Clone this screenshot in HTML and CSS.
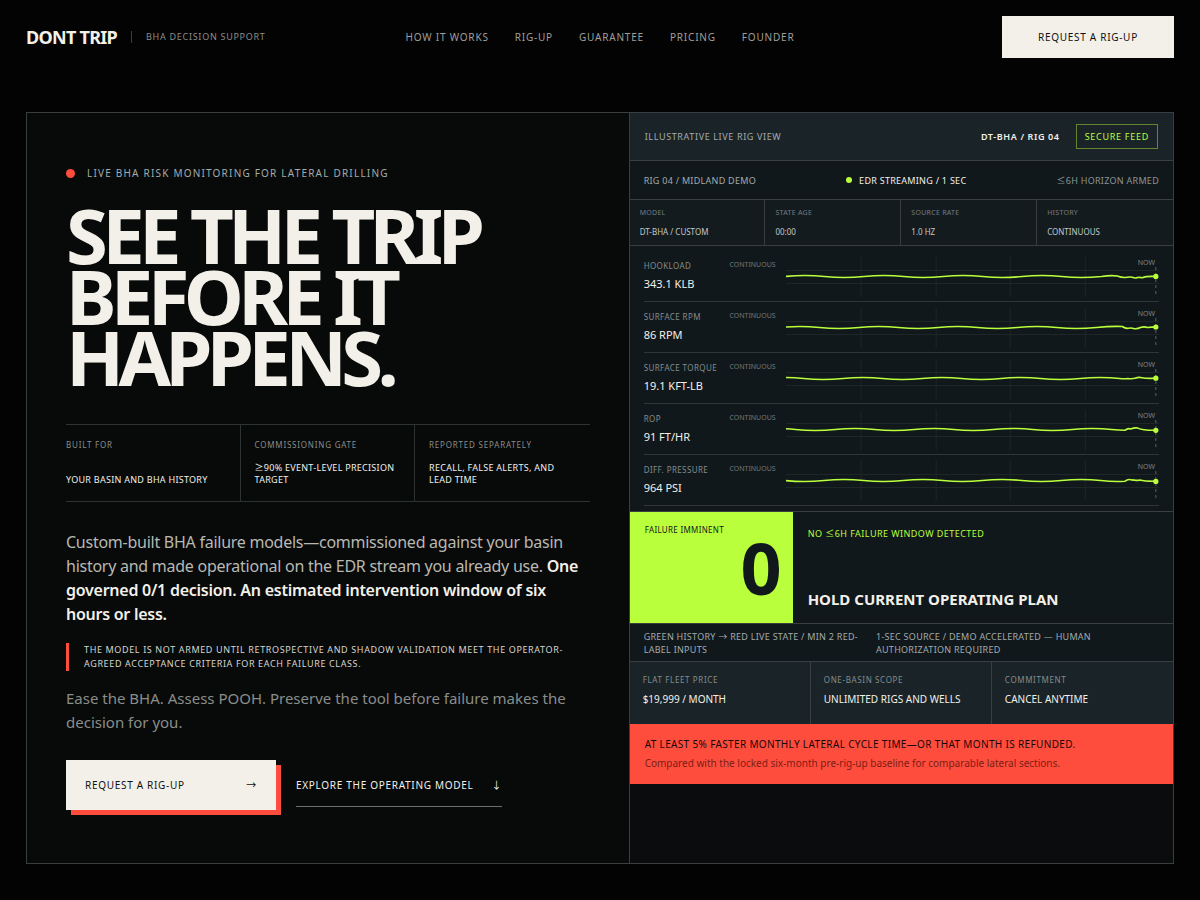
FILE: index.html
```html
<!DOCTYPE html>
<html lang="en">
<head>
  <meta charset="UTF-8">
  <meta name="viewport" content="width=device-width, initial-scale=1.0">
  <title>Dont Trip | BHA Decision Support</title>
  <link rel="stylesheet" href="styles.css">
</head>
<body>
  <header class="site-header">
    <a class="brand" href="#top">
      <span class="brand-name">DONT TRIP</span>
      <span class="brand-sub">BHA DECISION SUPPORT</span>
    </a>
    <nav class="site-nav">
      <a href="#how">HOW IT WORKS</a>
      <a href="#rig-up">RIG-UP</a>
      <a href="#guarantee">GUARANTEE</a>
      <a href="#pricing">PRICING</a>
      <a href="#founder">FOUNDER</a>
    </nav>
    <a class="header-cta" href="#request">REQUEST A RIG-UP</a>
  </header>

  <main class="hero" id="top">
    <section class="hero-copy">
      <p class="eyebrow"><span class="dot dot-red"></span>LIVE BHA RISK MONITORING FOR LATERAL DRILLING</p>
      <h1>SEE THE TRIP<br>BEFORE IT<br>HAPPENS.</h1>

      <dl class="facts">
        <div>
          <dt>BUILT FOR</dt>
          <dd>YOUR BASIN AND BHA HISTORY</dd>
        </div>
        <div>
          <dt>COMMISSIONING GATE</dt>
          <dd><span class="sym">≥</span>90% EVENT-LEVEL PRECISION TARGET</dd>
        </div>
        <div>
          <dt>REPORTED SEPARATELY</dt>
          <dd>RECALL, FALSE ALERTS, AND LEAD TIME</dd>
        </div>
      </dl>

      <p class="lead">Custom-built BHA failure models—commissioned against your basin history and made operational on the EDR stream you already use. <strong>One governed 0/1 decision. An estimated intervention window of six hours or less.</strong></p>
      <p class="notice">THE MODEL IS NOT ARMED UNTIL RETROSPECTIVE AND SHADOW VALIDATION MEET THE OPERATOR-AGREED ACCEPTANCE CRITERIA FOR EACH FAILURE CLASS.</p>
      <p class="sub">Ease the BHA. Assess POOH. Preserve the tool before failure makes the decision for you.</p>

      <div class="actions">
        <a class="btn-primary" href="#request"><span>REQUEST A RIG-UP</span><span class="sym">→</span></a>
        <a class="btn-link" href="#how"><span>EXPLORE THE OPERATING MODEL</span><span class="sym">↓</span></a>
      </div>
    </section>

    <section class="console">
      <div class="console-head">
        <span>ILLUSTRATIVE LIVE RIG VIEW</span>
        <strong>DT-BHA / RIG 04</strong>
        <span class="tag">SECURE FEED</span>
      </div>
      <div class="console-status">
        <span>RIG 04 / MIDLAND DEMO</span>
        <span class="streaming"><span class="dot dot-lime"></span>EDR STREAMING / 1 SEC</span>
        <span class="horizon"><span class="sym">≤</span>6H HORIZON ARMED</span>
      </div>
      <dl class="meta">
        <div><dt>MODEL</dt><dd>DT-BHA / CUSTOM</dd></div>
        <div><dt>STATE AGE</dt><dd>00:00</dd></div>
        <div><dt>SOURCE RATE</dt><dd>1.0 HZ</dd></div>
        <div><dt>HISTORY</dt><dd>CONTINUOUS</dd></div>
      </dl>

      <div class="traces">
        <div class="trace">
          <div class="trace-info">
            <span class="trace-name">HOOKLOAD</span>
            <span class="trace-mode">CONTINUOUS</span>
            <span class="trace-value">343.1 KLB</span>
          </div>
          <div class="chart">
            <svg viewBox="0 0 373 40" preserveAspectRatio="none">
              <path class="grid" d="M75 0v40M150 0v40M224 0v40M299 0v40M0 13.5h373M0 26.5h373"/>
              <path class="now-line" d="M369.5 10v30"/>
              <path class="wave" d="M-1 19.5q20 -2 39.5 0t39.5 0t39.5 0t39.5 0t39.5 0t39.5 0t39.5 0t39.5 0q10 -1.4 16 -.5q4 1.6 8 1.5q4 -1 7 -.2q3 1.2 5 .2q3 -.4 5 .2q4 -1.6 13 -1.2"/>
              <circle class="now-dot" cx="369.5" cy="19.4" r="2.6"/>
            </svg>
            <span class="now">NOW</span>
          </div>
        </div>
        <div class="trace">
          <div class="trace-info">
            <span class="trace-name">SURFACE RPM</span>
            <span class="trace-mode">CONTINUOUS</span>
            <span class="trace-value">86 RPM</span>
          </div>
          <div class="chart">
            <svg viewBox="0 0 373 40" preserveAspectRatio="none">
              <path class="grid" d="M75 0v40M150 0v40M224 0v40M299 0v40M0 13.5h373M0 26.5h373"/>
              <path class="now-line" d="M369.5 10v30"/>
              <path class="wave" d="M-6 19.5q20 -2 39.5 0t39.5 0t39.5 0t39.5 0t39.5 0t39.5 0t39.5 0t39.5 0q14 -1.4 26 -1q3 2.2 6 1.8q3 -.8 6 .4q4 .2 6 -1.2q4 -1.2 7 0q4 -.6 10 -.6"/>
              <circle class="now-dot" cx="369.5" cy="19" r="2.6"/>
            </svg>
            <span class="now">NOW</span>
          </div>
        </div>
        <div class="trace">
          <div class="trace-info">
            <span class="trace-name">SURFACE TORQUE</span>
            <span class="trace-mode">CONTINUOUS</span>
            <span class="trace-value">19.1 KFT-LB</span>
          </div>
          <div class="chart">
            <svg viewBox="0 0 373 40" preserveAspectRatio="none">
              <path class="grid" d="M75 0v40M150 0v40M224 0v40M299 0v40M0 13.5h373M0 26.5h373"/>
              <path class="now-line" d="M369.5 10v30"/>
              <path class="wave" d="M-22 19.5q20 -2 39.5 0t39.5 0t39.5 0t39.5 0t39.5 0t39.5 0t39.5 0t39.5 0t39.5 0q4 .6 8 0q4 .6 7 -.2q4 -1.4 7 -.6q4 1 14 .6"/>
              <circle class="now-dot" cx="369.5" cy="19.2" r="2.6"/>
            </svg>
            <span class="now">NOW</span>
          </div>
        </div>
        <div class="trace">
          <div class="trace-info">
            <span class="trace-name">ROP</span>
            <span class="trace-mode">CONTINUOUS</span>
            <span class="trace-value">91 FT/HR</span>
          </div>
          <div class="chart">
            <svg viewBox="0 0 373 40" preserveAspectRatio="none">
              <path class="grid" d="M75 0v40M150 0v40M224 0v40M299 0v40M0 13.5h373M0 26.5h373"/>
              <path class="now-line" d="M369.5 10v30"/>
              <path class="wave" d="M-30 19.5q20 -2 39.5 0t39.5 0t39.5 0t39.5 0t39.5 0t39.5 0t39.5 0t39.5 0t39.5 0q7 .8 13 .8q3 -2.4 6 -1.4q4 -1.6 7 -.8q5 2.4 18 2.2"/>
              <circle class="now-dot" cx="369.5" cy="20.3" r="2.6"/>
            </svg>
            <span class="now">NOW</span>
          </div>
        </div>
        <div class="trace">
          <div class="trace-info">
            <span class="trace-name">DIFF. PRESSURE</span>
            <span class="trace-mode">CONTINUOUS</span>
            <span class="trace-value">964 PSI</span>
          </div>
          <div class="chart">
            <svg viewBox="0 0 373 40" preserveAspectRatio="none">
              <path class="grid" d="M75 0v40M150 0v40M224 0v40M299 0v40M0 13.5h373M0 26.5h373"/>
              <path class="now-line" d="M369.5 10v30"/>
              <path class="wave" d="M-41 19.5q20 -2 39.5 0t39.5 0t39.5 0t39.5 0t39.5 0t39.5 0t39.5 0t39.5 0t39.5 0q12 1.4 24 .8q3 -2.6 7 -1.4q4 .8 8 .2q4 1.2 15 1.2"/>
              <circle class="now-dot" cx="369.5" cy="20.4" r="2.6"/>
            </svg>
            <span class="now">NOW</span>
          </div>
        </div>
      </div>

      <div class="decision">
        <div class="decision-flag">
          <span>FAILURE IMMINENT</span>
          <strong>0</strong>
        </div>
        <div class="decision-text">
          <p>NO <span class="sym">≤</span>6H FAILURE WINDOW DETECTED</p>
          <strong>HOLD CURRENT OPERATING PLAN</strong>
        </div>
      </div>
      <div class="console-notes">
        <p>GREEN HISTORY <span class="sym">→</span> RED LIVE STATE / MIN 2 RED-LABEL INPUTS</p>
        <p>1-SEC SOURCE / DEMO ACCELERATED — HUMAN AUTHORIZATION REQUIRED</p>
      </div>
      <dl class="terms">
        <div><dt>FLAT FLEET PRICE</dt><dd>$19,999 / MONTH</dd></div>
        <div><dt>ONE-BASIN SCOPE</dt><dd>UNLIMITED RIGS AND WELLS</dd></div>
        <div><dt>COMMITMENT</dt><dd>CANCEL ANYTIME</dd></div>
      </dl>
      <div class="guarantee">
        <strong>AT LEAST 5% FASTER MONTHLY LATERAL CYCLE TIME—OR THAT MONTH IS REFUNDED.</strong>
        <span>Compared with the locked six-month pre-rig-up baseline for comparable lateral sections.</span>
      </div>
    </section>
  </main>
</body>
</html>
```
FILE: styles.css
```css
:root {
  --black: #030303;
  --ink: #070a09;
  --panel: #11181b;
  --panel-light: #1a2428;
  --line: #393f40;
  --cream: #f3f0e9;
  --muted: #8b8d8a;
  --steel: #a3abad;
  --lime: #b9ff3c;
  --red: #ff4d3d;
}
* {
  box-sizing: border-box;
}
body {
  margin: 0;
  background: var(--black);
  color: var(--cream);
  font-family: "Noto Sans", sans-serif;
}
h1, p, dl, dd {
  margin: 0;
}
a {
  color: inherit;
  text-decoration: none;
}
/* math signs and arrows, line-height 0 so they never grow a row */
.sym {
  font-family: "Noto Sans CJK JP", sans-serif;
  line-height: 0;
}

/* header */
.site-header {
  display: grid;
  grid-template-columns: 1fr auto 1fr;
  align-items: center;
  height: 74px;
  padding: 0 26px;
}
.brand {
  display: flex;
  align-items: center;
  gap: 14px;
}
.brand-name {
  font-size: 18px;
  font-weight: 700;
  letter-spacing: -0.04em;
}
.brand-sub {
  padding-left: 14px;
  border-left: 1px solid var(--line);
  color: var(--muted);
  font-size: 9px;
  line-height: 12px;
  letter-spacing: 0.08em;
}
.site-nav {
  display: flex;
  gap: 26px;
  color: #a09f9b;
  font-size: 10px;
  letter-spacing: 0.08em;
}
.header-cta {
  justify-self: end;
  width: 172px;
  background: var(--cream);
  color: #111;
  font-size: 10px;
  line-height: 42px;
  letter-spacing: 0.07em;
  text-align: center;
}

/* hero */
.hero {
  display: grid;
  grid-template-columns: 1.05fr 0.95fr;
  min-height: 752px;
  margin: 38px 26px 36px;
  border: 1px solid var(--line);
  background: var(--ink);
}
.hero-copy {
  padding: 53px 39px 48px;
}
.dot {
  flex: none;
  border-radius: 50%;
}
.dot-red {
  width: 9px;
  height: 9px;
  background: var(--red);
}
.dot-lime {
  width: 6px;
  height: 6px;
  background: var(--lime);
}
.eyebrow {
  display: flex;
  align-items: center;
  gap: 12px;
  color: var(--steel);
  font-size: 10px;
  line-height: 14px;
  letter-spacing: 0.12em;
}
h1 {
  margin-top: 24px;
  font-size: 76px;
  font-weight: 700;
  line-height: 61px;
  letter-spacing: -0.075em;
}
.facts {
  display: grid;
  grid-template-columns: repeat(3, 1fr);
  margin-top: 37px;
  border-top: 1px solid #2d3232;
  border-bottom: 1px solid #2d3232;
}
.facts div {
  display: flex;
  flex-direction: column;
  justify-content: space-between;
  gap: 11px;
  padding: 14px 14px 15px;
  border-right: 1px solid #2d3232;
}
.facts div:first-child {
  padding-left: 0;
}
.facts div:last-child {
  border-right: 0;
}
.facts dt {
  color: var(--muted);
  font-size: 8px;
  line-height: 12px;
  letter-spacing: 0.1em;
}
.facts dd {
  font-size: 9px;
  line-height: 12px;
  letter-spacing: 0.03em;
}
.lead {
  margin-top: 28px;
  color: #b9b8b3;
  font-size: 16px;
  line-height: 24px;
  letter-spacing: -0.016em;
}
.lead strong {
  color: var(--cream);
  font-weight: 600;
}
.notice {
  margin-top: 17px;
  padding-left: 15px;
  border-left: 3px solid var(--red);
  color: #d8d6d0;
  font-size: 9px;
  line-height: 14px;
  letter-spacing: 0.07em;
}
.sub {
  margin-top: 15px;
  color: var(--muted);
  font-size: 15px;
  line-height: 24px;
}
.actions {
  display: flex;
  gap: 20px;
  margin-top: 26px;
  font-size: 10px;
  letter-spacing: 0.07em;
}
.btn-primary {
  display: flex;
  align-items: center;
  justify-content: space-between;
  width: 210px;
  height: 50px;
  padding: 0 19px;
  background: var(--cream);
  box-shadow: 5px 5px 0 var(--red);
  color: #111;
}
.btn-link {
  display: flex;
  align-self: center;
  align-items: center;
  gap: 18px;
  height: 44px;
  border-bottom: 1px solid #6c6e6c;
}

/* console */
.console {
  border-left: 1px solid var(--line);
  background: #0a0c0e;
}
.console-head {
  display: flex;
  align-items: center;
  gap: 16px;
  height: 48px;
  padding: 0 15px;
  border-bottom: 1px solid var(--line);
  background: var(--panel-light);
  color: var(--steel);
  font-size: 9px;
  letter-spacing: 0.07em;
}
.console-head strong {
  margin-left: auto;
  color: var(--cream);
  font-weight: 600;
}
.tag {
  padding: 0 8px;
  border: 1px solid #64852f;
  color: var(--lime);
  line-height: 23px;
  letter-spacing: 0.08em;
}
.console-status {
  display: flex;
  align-items: center;
  justify-content: space-between;
  height: 39px;
  padding: 0 14px;
  border-bottom: 1px solid var(--line);
  background: var(--panel);
  color: var(--steel);
  font-size: 9px;
  letter-spacing: 0.03em;
}
.streaming {
  display: flex;
  align-items: center;
  gap: 7px;
  color: var(--cream);
}
.horizon {
  color: #8b9496;
}
.meta {
  display: grid;
  grid-template-columns: repeat(4, 1fr);
  border-bottom: 1px solid var(--line);
  background: #141b1e;
}
.meta div {
  padding: 7px 10px;
  border-right: 1px solid var(--line);
}
.meta div:last-child {
  border-right: 0;
}
.meta dt {
  color: #757e80;
  font-size: 7px;
  line-height: 12px;
  letter-spacing: 0.04em;
}
.meta dd {
  margin-top: 7px;
  color: #c3c7c6;
  font-size: 8px;
  line-height: 12px;
}
.traces {
  padding: 5px 14px;
  border-bottom: 1px solid var(--line);
  background: var(--panel);
}
.trace {
  display: grid;
  grid-template-columns: 132px 1fr;
  gap: 10px;
  height: 51px;
  border-bottom: 1px solid #2f3638;
}
.trace-info {
  display: grid;
  grid-template-columns: 1fr auto;
  align-content: start;
  gap: 4px;
  padding-top: 8px;
}
.trace-name {
  color: #838c8e;
  font-size: 8px;
  line-height: 14px;
  letter-spacing: 0.05em;
}
.trace-mode {
  color: #6f797b;
  font-size: 7px;
  line-height: 12px;
}
.trace-value {
  font-size: 11px;
  line-height: 14px;
}
.chart {
  position: relative;
  padding-top: 6px;
}
.chart svg {
  display: block;
  width: 100%;
  height: 40px;
}
.now {
  position: absolute;
  top: 6px;
  right: 4px;
  color: #7c8587;
  font-size: 7px;
  line-height: 12px;
}
.grid {
  fill: none;
  stroke: #1e2628;
}
.now-line {
  stroke: #596163;
  stroke-dasharray: 3 3;
}
.wave {
  fill: none;
  stroke: var(--lime);
  stroke-width: 1.6;
}
.now-dot {
  fill: var(--lime);
}
.decision {
  display: grid;
  grid-template-columns: 3fr 7fr;
  height: 112px;
  border-bottom: 1px solid var(--line);
  background: var(--panel);
}
.decision-flag {
  display: flex;
  flex-direction: column;
  padding: 12px 11px 12px 15px;
  background: var(--lime);
  color: var(--panel);
}
.decision-flag span {
  font-size: 8px;
  line-height: 12px;
  letter-spacing: 0.04em;
}
.decision-flag strong {
  align-self: flex-end;
  font-size: 72px;
  line-height: 62px;
}
.decision-text {
  display: flex;
  flex-direction: column;
  justify-content: space-between;
  padding: 15px 15px 14px;
}
.decision-text p {
  color: var(--lime);
  font-size: 9px;
  line-height: 14px;
  letter-spacing: 0.05em;
}
.decision-text strong {
  font-size: 15px;
  line-height: 20px;
}
.console-notes {
  display: grid;
  grid-template-columns: 11fr 14fr;
  gap: 10px;
  padding: 6px 14px 5px;
  border-bottom: 1px solid var(--line);
  background: var(--panel);
  color: var(--steel);
  font-size: 9px;
  line-height: 13px;
  letter-spacing: 0.03em;
}
.console-notes p:last-child {
  padding-right: 56px;
}
.terms {
  display: grid;
  grid-template-columns: repeat(3, 1fr);
  background: var(--panel-light);
}
.terms div {
  height: 62px;
  padding: 11px 13px;
  border-right: 1px solid var(--line);
}
.terms div:last-child {
  border-right: 0;
}
.terms dt {
  color: #838c8e;
  font-size: 8px;
  line-height: 14px;
  letter-spacing: 0.08em;
}
.terms dd {
  margin-top: 5px;
  font-size: 10px;
  line-height: 14px;
}
.guarantee {
  display: flex;
  flex-direction: column;
  gap: 5px;
  padding: 13px 15px 14px;
  background: var(--red);
  color: #190806;
  font-size: 10px;
  line-height: 14px;
}
.guarantee strong {
  font-weight: 400;
  letter-spacing: 0.035em;
}
.guarantee span {
  color: #7a1d15;
}
```
